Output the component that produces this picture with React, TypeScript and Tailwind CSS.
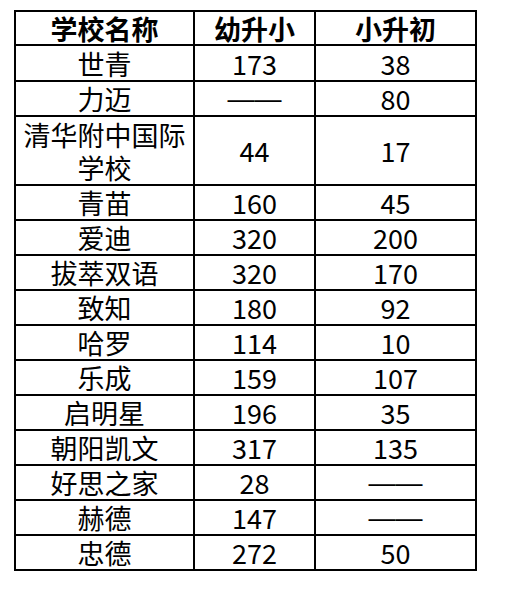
const rows: { name: string; a: string; b: string; h: string }[] = [
  { name: "世青", a: "173", b: "38", h: "h-[34px]" },
  { name: "力迈", a: "——", b: "80", h: "h-[33px]" },
  { name: "清华附中国际学校", a: "44", b: "17", h: "h-[67px]" },
  { name: "青苗", a: "160", b: "45", h: "h-[33px]" },
  { name: "爱迪", a: "320", b: "200", h: "h-[33px]" },
  { name: "拔萃双语", a: "320", b: "170", h: "h-[33px]" },
  { name: "致知", a: "180", b: "92", h: "h-[33px]" },
  { name: "哈罗", a: "114", b: "10", h: "h-[33px]" },
  { name: "乐成", a: "159", b: "107", h: "h-[33px]" },
  { name: "启明星", a: "196", b: "35", h: "h-[33px]" },
  { name: "朝阳凯文", a: "317", b: "135", h: "h-[33px]" },
  { name: "好思之家", a: "28", b: "——", h: "h-[33px]" },
  { name: "赫德", a: "147", b: "——", h: "h-[33px]" },
  { name: "忠德", a: "272", b: "50", h: "h-[33px]" },
]

function Value({ v }: { v: string }) {
  if (v === "——") {
    return <span className="font-['Liberation_Sans',sans-serif] text-[27px] leading-[30px]">——</span>
  }
  return <span>{v}</span>
}

export default function App() {
  return (
    <div className="min-h-[591px] w-[523px] bg-white pt-[10px] pl-[14px] font-['Noto_Sans_CJK_SC',sans-serif] text-[27px] leading-[31px] text-black">
      <div className="grid w-[463px] grid-cols-[177px_119px_159px] gap-[2px] bg-black p-[2px]">
        {["学校名称", "幼升小", "小升初"].map((t) => (
          <div key={t} className="flex h-[32px] items-center justify-center bg-white font-bold">
            {t}
          </div>
        ))}
        {rows.map((r) => (
          <>
            <div
              key={r.name}
              className={`flex ${r.h} items-center justify-center bg-white px-1 text-center leading-[33px]`}
            >
              {r.name}
            </div>
            <div key={r.name + "a"} className={`flex ${r.h} items-center justify-center bg-white`}>
              <Value v={r.a} />
            </div>
            <div key={r.name + "b"} className={`flex ${r.h} items-center justify-center bg-white`}>
              <Value v={r.b} />
            </div>
          </>
        ))}
      </div>
    </div>
  )
}
